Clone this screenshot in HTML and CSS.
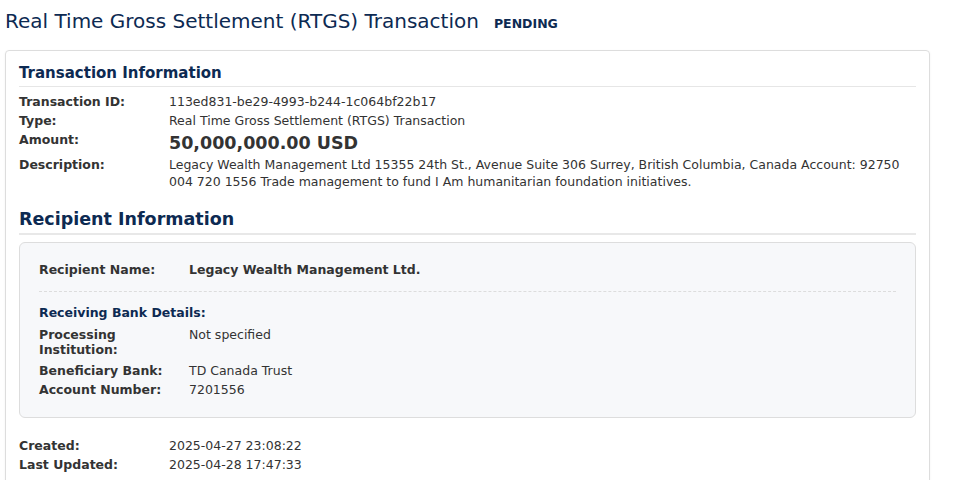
FILE: index.html
```html
<!DOCTYPE html>
<html>
<head>
<meta charset="utf-8">
<link rel="stylesheet" href="styles.css">
</head>
<body>
<div class="header">
  <h1 class="title">Real Time Gross Settlement (RTGS) Transaction</h1>
  <span class="status">PENDING</span>
</div>
<div class="card">
  <h2 class="section-title">Transaction Information</h2>
  <div class="row"><div class="label">Transaction ID:</div><div class="value">113ed831-be29-4993-b244-1c064bf22b17</div></div>
  <div class="row"><div class="label">Type:</div><div class="value">Real Time Gross Settlement (RTGS) Transaction</div></div>
  <div class="row"><div class="label">Amount:</div><div class="value amount">50,000,000.00 USD</div></div>
  <div class="row"><div class="label">Description:</div><div class="value">Legacy Wealth Management Ltd 15355 24th St., Avenue Suite 306 Surrey, British Columbia, Canada Account: 92750 004 720 1556 Trade management to fund I Am humanitarian foundation initiatives.</div></div>

  <h2 class="big-title">Recipient Information</h2>
  <div class="recipient-box">
    <div class="row"><div class="label">Recipient Name:</div><div class="value strong">Legacy Wealth Management Ltd.</div></div>
    <div class="divider"></div>
    <div class="sub-title">Receiving Bank Details:</div>
    <div class="row row-wrap"><div class="label">Processing Institution:</div><div class="value">Not specified</div></div>
    <div class="row"><div class="label">Beneficiary Bank:</div><div class="value">TD Canada Trust</div></div>
    <div class="row"><div class="label">Account Number:</div><div class="value">7201556</div></div>
  </div>

  <div class="meta">
    <div class="row"><div class="label">Created:</div><div class="value">2025-04-27 23:08:22</div></div>
    <div class="row"><div class="label">Last Updated:</div><div class="value">2025-04-28 17:47:33</div></div>
  </div>
</div>
</body>
</html>
```

FILE: styles.css
```css
* { box-sizing: border-box; }
html, body { margin: 0; padding: 0; background: #fff; }
body {
  font-family: "DejaVu Sans", sans-serif;
  font-size: 12.5px;
  color: #333;
  padding: 0 5px;
}
.header {
  display: flex;
  align-items: baseline;
  gap: 15px;
  padding-top: 9px;
  height: 50px;
}
.title {
  margin: 0;
  font-size: 20px;
  font-weight: normal;
  color: #0d2a52;
  line-height: 24px;
}
.status {
  font-size: 12.5px;
  font-weight: bold;
  color: #0d2a52;
}
.card {
  width: 925px;
  border: 1px solid #ddd;
  border-radius: 4px;
  padding: 11px 13px 20px;
  box-shadow: 0 1px 3px rgba(0,0,0,0.05);
}
.section-title {
  margin: 0 0 6px;
  font-size: 15px;
  font-weight: bold;
  color: #0d2a52;
  line-height: 22px;
  padding-bottom: 2px;
  border-bottom: 1px solid #e6e6e6;
}
.row {
  display: flex;
  line-height: 17.5px;
  margin-bottom: 1.5px;
}
.row:last-child { margin-bottom: 0; }
.label {
  flex: 0 0 150px;
  font-weight: bold;
  color: #333;
}
.value { flex: 1; }
.value.amount {
  font-size: 17.5px;
  font-weight: bold;
  line-height: 22px;
  padding-top: 1px;
}
.value.strong { font-weight: bold; }
.row-wrap { margin-bottom: 5px; }
.row-wrap .label { line-height: 15px; }
.row-wrap .value { line-height: 15px; }
.big-title {
  margin: 16px 0 7px;
  font-size: 17.5px;
  font-weight: bold;
  color: #0d2a52;
  line-height: 24px;
  padding-bottom: 2px;
  border-bottom: 2px solid #e8e8e8;
}
.recipient-box {
  background: #f7f8fa;
  border: 1px solid #ddd;
  border-radius: 6px;
  padding: 18px 19px 19px;
}
.divider {
  border-top: 1px dashed #ddd;
  margin: 12.5px 0 12px;
}
.sub-title {
  font-weight: bold;
  color: #0d2a52;
  line-height: 17.5px;
  margin-bottom: 5.5px;
}
.meta { margin-top: 19px; }
```
